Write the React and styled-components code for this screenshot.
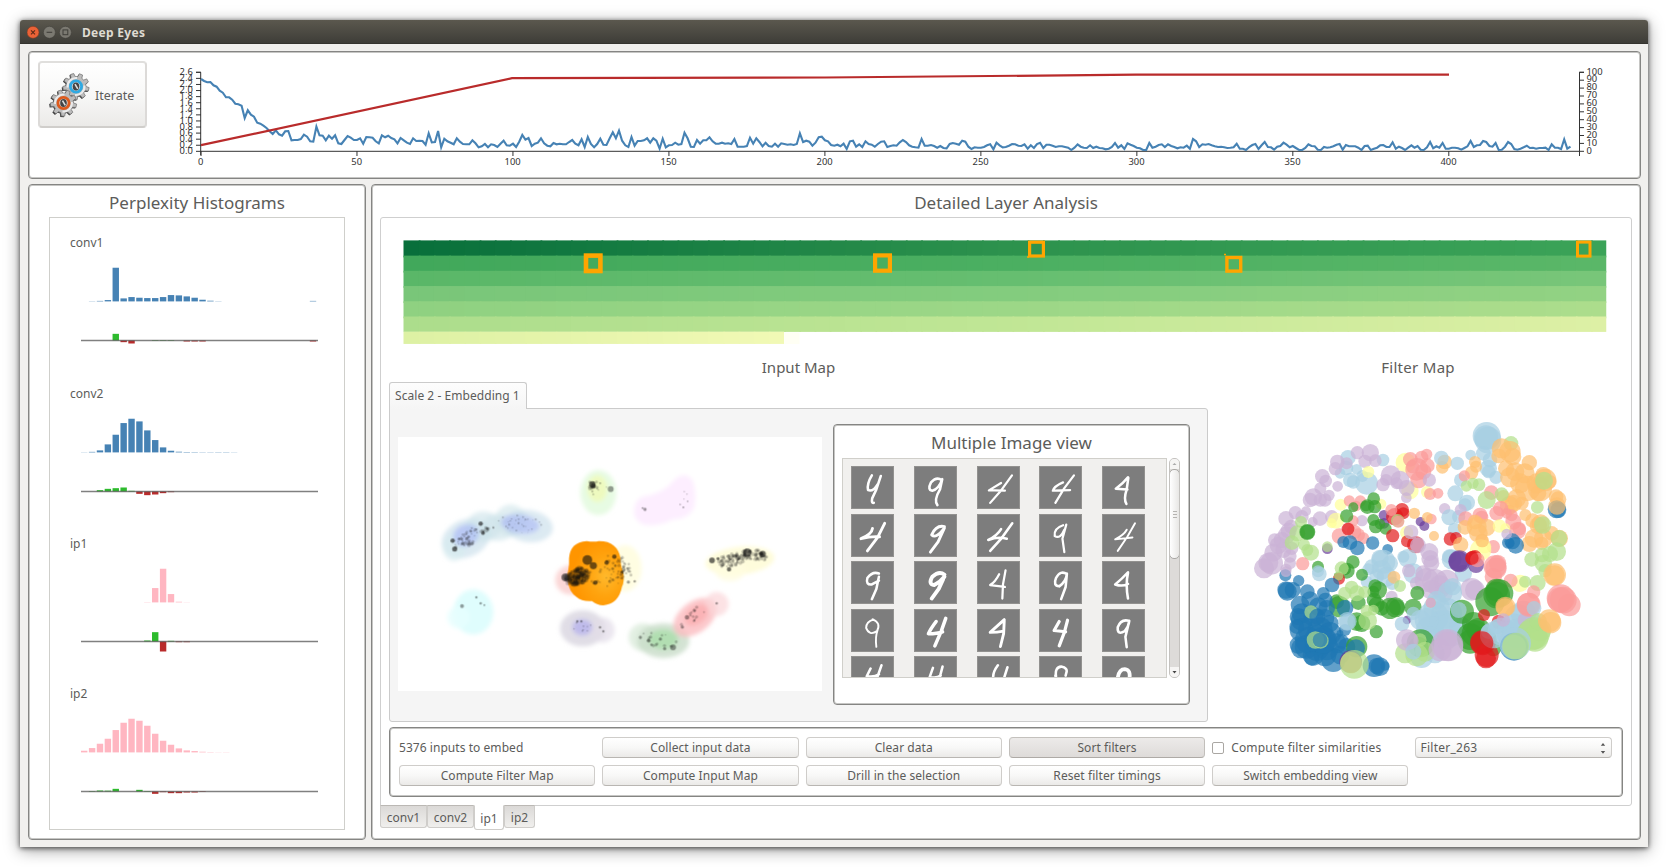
import React from "react";
import styled, { createGlobalStyle, css } from "styled-components";

const Global = createGlobalStyle`
  * { box-sizing: border-box; }
  body { margin: 0; background: #fff; font-family: "Noto Sans", "Open Sans", sans-serif; color: #5c5c5a; }
  svg { display: block; flex: none; }
`;

/* ---------- window chrome ---------- */

const Desktop = styled.div`
  padding: 20px;
  height: 867px;
  overflow: hidden;
`;
const Window = styled.div`
  width: 1628px;
  height: 827px;
  display: flex;
  flex-direction: column;
  background: #f1f0ee;
  border-radius: 3px 3px 0 0;
  box-shadow: 0 1px 5px rgba(0, 0, 0, 0.65), 0 3px 16px rgba(0, 0, 0, 0.4);
`;
const TitleBar = styled.header`
  height: 24px;
  flex: none;
  display: flex;
  align-items: center;
  gap: 4px;
  padding-left: 7px;
  border-radius: 3px 3px 0 0;
  border-bottom: 1px solid #35342f;
  background: linear-gradient(#5b584e, #3e3d38);
`;
const WindowTitle = styled.span`
  margin-left: 4px;
  padding-top: 2px;
  font-size: 12px;
  font-weight: 700;
  letter-spacing: 0.3px;
  color: #dfdbd2;
`;
const Body = styled.div`
  flex: 1;
  display: flex;
  flex-direction: column;
  gap: 5px;
  padding: 7px 7px 7px 8px;
`;
const Panel = styled.section`
  background: #fff;
  border: 1px solid #858583;
  border-radius: 4px;
  box-shadow: inset 0 0 0 1px #c6c6c4;
`;
const TopPanel = styled(Panel)`
  display: flex;
  height: 128px;
  flex: none;
  padding-left: 9px;
`;
const Controls = styled.div`
  display: flex;
  flex-direction: column;
  padding-top: 9px;
  width: 122px;
`;
const raised = css`
  font-family: inherit;
  color: #5c5c5a;
  border: 1px solid #cfcdca;
  border-bottom-color: #b9b6b2;
  border-radius: 4px;
  background: linear-gradient(#ffffff, #f8f8f7 50%, #ebeae8);
`;
const IterateButton = styled.button`
  ${raised}
  width: 109px;
  height: 67px;
  display: flex;
  align-items: center;
  padding: 1px 0 0 9px;
  gap: 5px;
  font-size: 12.5px;
  border-width: 2px;
  border-color: #e0dfdd #dcdad8 #d0cecb;
`;
const Columns = styled.div`
  flex: 1;
  display: flex;
  gap: 5px;
`;
const LeftPanel = styled(Panel)`
  width: 338px;
`;
const RightPanel = styled(Panel)`
  width: 1270px;
`;
const PanelTitle = styled.h1`
  margin: 0;
  height: ${(p) => p.$h || 32}px;
  line-height: 23px;
  padding-top: 6px;
  text-align: center;
  font-size: 17px;
  font-weight: 400;
`;

/* ---------- histograms ---------- */

const HistogramBox = styled.div`
  margin: 0 20px;
  height: 613px;
  border: 1px solid #cfcfcb;
`;
const HistogramSection = styled.div`
  height: 150.3px;
  padding-top: 17.4px;
`;
const LayerName = styled.div`
  height: 16px;
  line-height: 16px;
  padding-left: 20px;
  font-size: 12px;
`;
const HistogramSvg = styled.svg`
  margin-left: 31px;
`;

/* ---------- detail area ---------- */

const DetailFrame = styled.div`
  margin-left: 8px;
  width: 1252px;
  height: 589px;
  border: 1px solid #cfcfcf;
  border-radius: 3px 3px 3px 0;
  padding: 22px 8px 0;
`;
const HeatmapWrap = styled.div`
  padding-left: 14px;
`;
const MapRow = styled.div`
  display: flex;
`;
const InputColumn = styled.div`
  width: 819px;
`;
const FilterColumn = styled.div`
  flex: 1;
  display: flex;
  flex-direction: column;
  padding-left: 22px;
`;
const MapTitle = styled.h2`
  margin: 0;
  height: 37px;
  line-height: 24px;
  padding-top: 10px;
  text-align: center;
  font-size: 15px;
  font-weight: 400;
`;
const FilterTitle = styled(MapTitle)`
  height: 55px;
  width: 376px;
  letter-spacing: 0.3px;
`;
const EmbeddingTab = styled.div`
  position: relative;
  width: 138px;
  height: 27px;
  margin-bottom: -1px;
  padding-left: 5px;
  line-height: 26px;
  font-size: 12px;
  letter-spacing: 0.05px;
  white-space: nowrap;
  background: linear-gradient(#fdfdfd, #f5f5f5);
  border: 1px solid #cbcbcb;
  border-bottom: 0;
  border-radius: 3px 3px 0 0;
`;
const EmbeddingPane = styled.div`
  width: 819px;
  height: 314px;
  display: flex;
  align-items: flex-start;
  background: #f5f5f5;
  border: 1px solid #cbcbcb;
  border-radius: 0 3px 3px 3px;
`;
const InputMapSvg = styled.svg`
  margin: 28px 11px 0 8px;
  background: #fff;
`;
const ImagePanel = styled(Panel)`
  margin-top: 15px;
  width: 357px;
  height: 281px;
  padding: 0 8px;
`;
const ImageArea = styled.div`
  display: flex;
  gap: 2px;
`;
const Thumbs = styled.div`
  width: 325px;
  height: 220px;
  overflow: hidden;
  display: grid;
  grid-template-columns: repeat(5, 43px);
  grid-auto-rows: 43px;
  column-gap: 19.8px;
  row-gap: 4.6px;
  padding: 7px 0 0 8px;
  background: #f1f0ee;
  border: 1px solid #d0cfca;
`;
const Thumb = styled.svg`
  background: #7d7d7d;
  border: 1px solid #92918f;
`;
const ScrollTrack = styled.div`
  width: 11px;
  height: 220px;
  display: flex;
  flex-direction: column;
  align-items: center;
  background: #dddbd9;
  border: 1px solid #c4c2bf;
  border-radius: 5px;
  overflow: hidden;
`;
const ScrollEnd = styled.div`
  width: 9px;
  height: 10px;
  display: flex;
  align-items: center;
  justify-content: center;
  background: #f6f5f4;
`;
const ScrollHandle = styled.div`
  width: 11px;
  height: 90px;
  display: flex;
  flex-direction: column;
  align-items: center;
  justify-content: center;
  gap: 2px;
  border: 1px solid #aaa8a5;
  border-radius: 5px;
  background: linear-gradient(90deg, #fff, #e8e7e5);
`;
const Grip = styled.i`
  width: 4px;
  height: 1px;
  background: #b5b3b0;
`;
const Spacer = styled.div`
  flex: 1;
`;

/* ---------- action grid ---------- */

const ActionPanel = styled(Panel)`
  margin-top: 5px;
  width: 1234px;
  height: 70px;
  display: grid;
  grid-template-columns: repeat(6, 196.3px);
  grid-template-rows: 21px 21px;
  column-gap: 7px;
  row-gap: 7px;
  padding: 9px;
`;
const ActionButton = styled.button`
  ${raised}
  padding: 0;
  font-size: 12px;
  line-height: 18px;
  letter-spacing: 0.07px;
  ${(p) => p.$pressed && "background: linear-gradient(#eceae9, #dedbd9); border-color: #c4c1bd #c2bfbb #aeaaa6;"}
`;
const StatusText = styled.span`
  font-size: 12px;
  line-height: 21px;
  letter-spacing: 0.05px;
`;
const CheckLabel = styled.label`
  display: flex;
  align-items: center;
  gap: 7px;
  font-size: 12px;
  line-height: 21px;
  letter-spacing: 0.17px;
  white-space: nowrap;
`;
const CheckBox = styled.span`
  width: 12px;
  height: 12px;
  background: #fff;
  border: 1px solid #aaa7a3;
  border-radius: 2px;
`;
const Select = styled.div`
  ${raised}
  display: flex;
  align-items: center;
  justify-content: space-between;
  padding: 0 5px 0 4px;
  font-size: 12px;
  line-height: 18px;
  letter-spacing: 0.25px;
`;

const LayerTabs = styled.nav`
  display: flex;
  align-items: flex-start;
  margin: -1px 0 0 8px;
`;
const LayerTab = styled.span`
  width: ${(p) => p.$w}px;
  height: ${(p) => (p.$active ? 25 : 23)}px;
  line-height: ${(p) => (p.$active ? 25 : 23)}px;
  text-align: center;
  font-size: 12px;
  border: 1px solid #cfcdca;
  border-top-color: ${(p) => (p.$active ? "#fff" : "#bbb8b4")};
  border-radius: 0 0 3px 3px;
  background: ${(p) => (p.$active ? "#fff" : "linear-gradient(#dbd9d7, #f0efed)")};
`;

/* ---------- loss / accuracy chart ---------- */

const LOSS = [
  237,243,247,246,256,260,272,278,292,292,299,311,313,317,354,331,344,350,368,371,377,384,394,402,391,403,407,394,393,421,
  420,420,417,404,410,424,425,380,406,407,421,407,416,406,430,432,420,408,413,420,420,415,431,411,412,413,424,430,406,412,
  407,414,418,430,414,421,428,432,415,423,422,423,434,400,427,426,393,442,416,424,428,433,415,425,432,433,433,421,430,442,
  439,432,442,433,435,441,431,422,436,437,431,441,425,405,419,414,438,431,428,415,430,437,439,429,433,431,433,433,426,420,
  431,436,418,441,411,432,442,432,416,434,435,415,397,415,392,422,436,441,411,437,423,423,421,415,428,415,422,446,416,442,
  436,435,428,434,432,398,415,440,441,420,431,421,421,412,424,431,431,428,431,430,432,417,440,440,440,438,413,431,415,426,
  439,428,438,440,431,440,430,432,434,433,435,432,400,426,422,425,437,428,412,410,421,424,435,437,434,439,431,447,424,422,
  440,433,441,424,432,434,440,432,425,424,441,438,436,437,427,420,426,436,440,442,443,417,437,437,435,438,443,438,444,445,
  432,429,431,434,422,425,440,447,442,443,443,441,436,433,448,428,436,442,441,437,432,433,437,438,433,446,436,444,432,428,
  444,434,434,437,441,439,439,441,443,450,443,433,440,443,444,436,444,440,444,445,448,446,441,429,443,436,447,430,434,438,
  443,445,450,450,429,443,440,435,433,441,433,438,441,445,442,443,437,446,417,424,441,433,434,432,436,439,441,440,442,444,
  443,442,431,446,446,450,441,435,432,447,436,426,441,442,449,440,438,428,434,442,438,444,450,450,444,433,438,439,449,450,
  441,443,442,439,434,432,449,435,439,439,439,443,450,438,437,450,446,443,436,435,441,441,427,446,440,444,450,443,436,443,
  438,449,450,442,426,445,439,443,429,446,446,443,443,445,449,444,439,423,441,436,435,423,426,438,440,429,450,449,440,426,
  432,447,449,446,442,437,444,443,446,444,444,443,450,433,443,443,447,418,446,440,
];

const range = (n) => Array.from({ length: n }, (_, i) => i);
const iterX = (i) => 201 + i * 3.1195;

function TrainingChart() {
  const label = { fontSize: 9.4, fill: "#333" };
  return (
    <svg width="1474" height="126" viewBox="160 52 1474 126" fontFamily="Noto Sans, sans-serif">
      <g stroke="#333" strokeWidth="1" fill="none">
        <path d="M196 72.3H200.7V155M201 151.3H1579.5M1584 72.3H1579.5V156" />
        {range(14).map((i) => (
          <path key={i} d={`M196 ${72.3 + i * 6.08}H201`} />
        ))}
        {range(11).map((i) => (
          <path key={i} d={`M1579 ${72.3 + i * 7.9}H1584`} />
        ))}
        {range(9).map((i) => (
          <path key={i} d={`M${iterX(i * 50)} 151V156`} />
        ))}
      </g>
      <g {...label} textAnchor="end">
        {range(14).map((i) => (
          <text key={i} x="192.8" y={75.4 + i * 6.02}>{(2.6 - i * 0.2).toFixed(1)}</text>
        ))}
      </g>
      <g {...label}>
        {range(11).map((i) => (
          <text key={i} x="1586.5" y={74.5 + i * 7.95}>{100 - i * 10}</text>
        ))}
      </g>
      <g {...label} textAnchor="middle">
        {range(9).map((i) => (
          <text key={i} x={iterX(i * 50) - 0.3} y="164.6">{i * 50}</text>
        ))}
      </g>
      <polyline
        points={LOSS.map((v, i) => `${iterX(i).toFixed(1)},${(v / 3).toFixed(1)}`).join(" ")}
        fill="none" stroke="#4682b4" strokeWidth="2.1"
      />
      <polyline points="201,145.2 512,78.2 825,77.5 1136,74.7 1449,74.7" fill="none" stroke="#b92b2b" strokeWidth="2.2" />
    </svg>
  );
}

/* ---------- histogram data (heights in thirds of a pixel) ---------- */

const LAYERS = [
  {
    name: "conv1", color: "#4682b4",
    bars: { 1: 0.6, 2: 1.5, 3: 4, 4: 101, 5: 9, 6: 13, 7: 11, 8: 10, 9: 10, 10: 13, 11: 19, 12: 18, 13: 15, 14: 11, 15: 5, 16: 2, 17: 0.6, 29: 1.5 },
    diff: { 4: 20, 5: -5, 6: -9, 9: 1.5, 10: 1.5, 11: 1.5, 13: -3, 14: -3, 15: -3, 29: -3 },
  },
  {
    name: "conv2", color: "#4682b4",
    bars: { 0: 0.5, 1: 1.6, 2: 6, 3: 24, 4: 53, 5: 88, 6: 101, 7: 93, 8: 66, 9: 37, 10: 15, 11: 5, 12: 2, 13: 1.2, 14: 1, 15: 0.7, 16: 0.7, 17: 0.8, 18: 0.8, 19: 0.5 },
    diff: { 2: 4, 3: 8, 4: 10, 5: 12, 6: 2, 7: -7, 8: -11, 9: -9, 10: -5, 11: -2 },
  },
  {
    name: "ip1", color: "#ffb6c1",
    bars: { 8: 0.8, 9: 43, 10: 101, 11: 25, 12: 2, 13: 0.5 },
    diff: { 8: 3, 9: 28, 10: -30, 11: 2, 12: -2, 13: -2 },
  },
  {
    name: "ip2", color: "#ffb6c1",
    bars: { 0: 5, 1: 13, 2: 26, 3: 41, 4: 67, 5: 89, 6: 101, 7: 95, 8: 80, 9: 56, 10: 35, 11: 23, 12: 12, 13: 6, 14: 4, 15: 2, 16: 1, 17: 0.5, 18: 0.6 },
    diff: { 1: 1.5, 2: 3, 3: 2.5, 4: 8, 7: 5, 8: 1.5, 9: -7, 10: -2, 11: -5, 12: -5, 13: -3, 14: -3, 15: -1.5 },
  },
];

function Histogram({ layer }) {
  const x = (i) => i * 7.89;
  return (
    <HistogramSection>
      <LayerName>{layer.name}</LayerName>
      <HistogramSvg width="237" height="116" viewBox="0 0 237 116">
        {Object.entries(layer.bars).map(([i, h]) => (
          <rect key={i} x={x(i)} y={50.4 - h / 3} width="6.4" height={h / 3} fill={layer.color} />
        ))}
        {Object.entries(layer.diff).map(([i, h]) => (
          <rect key={i} x={x(i)} y={h > 0 ? 89.5 - h / 3 : 89.5} width="6.4" height={Math.abs(h) / 3} fill={h > 0 ? "#2dbb2d" : "#b92b2b"} />
        ))}
        <path d="M0 89.5H237" stroke="#555" strokeOpacity="0.75" strokeWidth="1.3" />
      </HistogramSvg>
    </HistogramSection>
  );
}

/* ---------- heat map ---------- */

const HEAT_ROWS = [
  [[8, 111, 59], [45, 146, 77], [59, 163, 88]],
  [[65, 168, 91], [75, 175, 97], [90, 183, 104]],
  [[90, 183, 104], [102, 190, 112], [120, 198, 121]],
  [[121, 198, 121], [131, 204, 126], [146, 210, 131]],
  [[143, 209, 129], [156, 215, 135], [172, 221, 140]],
  [[172, 221, 140], [192, 230, 149], [221, 240, 165]],
  [[221, 241, 164], [231, 245, 172], [241, 249, 181]],
];
const mix = (stops, t) => {
  const [a, b, u] = t < 0.5 ? [stops[0], stops[1], t * 2] : [stops[1], stops[2], t * 2 - 1];
  return `rgb(${a.map((v, i) => Math.round(v + (b[i] - v) * u)).join(",")})`;
};
const MARKERS = [
  [583.7, 253.3, 19, 20, 4.6],
  [873, 253.3, 19, 19.5, 4.2],
  [1028, 240.6, 17, 17, 3.2],
  [1225.2, 255.8, 17.2, 17, 3.4],
  [1576, 240.6, 15.5, 17, 3],
];

function Heatmap() {
  return (
    <svg width="1205" height="105" viewBox="403 240 1205 105">
      {HEAT_ROWS.map((stops, r) => {
        const n = r === 6 ? 25 : 79;
        return range(n).map((c) => (
          <rect
            key={`${r}-${c}`} x={403.5 + c * 15.225} y={240.4 + r * 15.22} width={c === n - 1 ? 15.2 : 17}
            height={r === 6 ? 12.2 : r === 5 ? 15.4 : 17} fill={mix(stops, c / (n - 1))}
          />
        ));
      })}
      <rect x="784.5" y="332.5" width="15" height="11.5" fill="#fffff4" />
      {MARKERS.map(([x, y, w, h, s]) => (
        <rect key={x} x={x + s / 2} y={y + s / 2} width={w - s} height={h - s} fill="none" stroke="#ffa500" strokeWidth={s} />
      ))}
      <path d="M1224 254.5H1226M1027 257H1029" stroke="#ffa500" strokeWidth="1.6" />
    </svg>
  );
}

/* ---------- input map ---------- */

const random = (seed) => () => {
  seed = (seed * 16807) % 2147483647;
  return seed / 2147483647;
};
/* cx, cy, rx, ry, rotation, colour, opacity */
const HAZE = [
  [258, 385, 76, 56, -25, "#c5dcea", 0.6],
  [222, 412, 34, 42, 0, "#d6ebee", 0.6],
  [310, 350, 52, 46, 0, "#cbe2ea", 0.6],
  [355, 352, 50, 40, 0, "#cbe2ea", 0.6],
  [392, 332, 48, 48, 0, "#cfe5ea", 0.6],
  [445, 348, 74, 48, 8, "#c5dcea", 0.6],
  [258, 376, 40, 32, -25, "#9faef5", 0.55],
  [420, 342, 58, 28, 8, "#a9b6f5", 0.6],
  [655, 248, 54, 68, 0, "#e4fbe0", 0.9],
  [652, 236, 30, 40, 0, "#f2fbb0", 0.7],
  [572, 510, 46, 44, 0, "#f9bdba", 0.6],
  [735, 475, 50, 70, 0, "#fffcd8", 0.75],
  [1080, 452, 104, 42, -6, "#fdfbcf", 0.75],
  [1050, 480, 46, 34, 0, "#fffde0", 0.8],
  [280, 606, 60, 68, 0, "#dffdfd", 1],
  [236, 622, 34, 34, 0, "#e6fefe", 0.8],
  [608, 655, 68, 54, 0, "#d6d2dd", 0.75],
  [668, 660, 36, 38, 0, "#e2dde8", 0.7],
  [607, 652, 30, 24, 0, "#b1adee", 0.7],
  [790, 682, 44, 42, 0, "#d8e9d8", 0.75],
  [850, 692, 78, 52, 0, "#c8dcc8", 0.8],
  [850, 688, 44, 30, 0, "#a4dda4", 0.7],
  [945, 622, 74, 46, -38, "#fbbcbf", 0.8],
  [1010, 582, 36, 36, 0, "#fbd6d8", 0.7],
  [950, 615, 40, 26, -38, "#fba9ad", 0.7],
];
/* cx, cy, rx, ry, rotation (deg), count, minimum r, maximum r */
const CLOUDS = [
  [262, 382, 46, 16, -40, 34, 2, 5],
  [262, 400, 20, 10, -20, 14, 3, 6],
  [322, 358, 24, 8, -10, 16, 2, 5],
  [420, 342, 70, 26, 4, 36, 1, 3],
  [640, 228, 14, 18, 0, 10, 3, 6],
  [660, 240, 30, 30, 0, 7, 2, 3],
  [592, 500, 36, 26, -14, 130, 4, 8],
  [705, 475, 32, 48, -10, 34, 2, 5],
  [735, 470, 16, 36, -28, 22, 3, 5],
  [680, 500, 60, 30, 0, 18, 2, 5],
  [1050, 452, 36, 20, -8, 60, 3, 6],
  [1105, 436, 40, 20, -8, 56, 3, 6],
  [1140, 438, 24, 14, 0, 22, 3, 6],
  [830, 690, 62, 22, 8, 16, 2, 5],
  [940, 618, 46, 18, -40, 14, 2, 5],
  [610, 648, 44, 16, 0, 8, 2, 3],
  [905, 265, 30, 26, 0, 5, 1.5, 2.5],
];
const POINTS = [
  [218, 392, 7], [224, 417, 8], [302, 341, 7], [309, 369, 6], [637, 223, 10], [640, 228, 8], [622, 450, 15], [640, 467, 11],
  [703, 440, 7], [646, 518, 7], [680, 458, 7], [556, 502, 12], [996, 451, 9], [1014, 446, 5], [1148, 432, 10], [1102, 428, 13],
  [1047, 478, 7], [692, 237, 9], [246, 588, 6], [289, 562, 4], [302, 580, 4], [313, 585, 3], [592, 634, 4], [604, 634, 4], [660, 652, 4],
  [670, 664, 4], [781, 682, 5], [806, 692, 6], [841, 687, 5], [854, 716, 5], [879, 712, 9], [921, 622, 7], [1010, 580, 4],
  [907, 651, 5], [943, 601, 5], [795, 298, 5], [788, 294, 3], [923, 274, 2.5], [910, 292, 3], [764, 514, 4], [745, 516, 5],
];

function InputMap() {
  const rnd = random(77);
  const dots = CLOUDS.flatMap(([cx, cy, rx, ry, rot, n, r0, r1]) =>
    range(n).map(() => {
      const a = rnd() * Math.PI * 2;
      const d = Math.sqrt(rnd());
      const t = (rot * Math.PI) / 180;
      const u = Math.cos(a) * d * rx;
      const v = Math.sin(a) * d * ry;
      return [cx + u * Math.cos(t) - v * Math.sin(t), cy + u * Math.sin(t) + v * Math.cos(t), r0 + rnd() * (r1 - r0)];
    })
  );
  return (
    <InputMapSvg width="424" height="254" viewBox="54 81 1272 762">
      <defs>
        <filter id="haze" x="-30%" y="-30%" width="160%" height="160%">
          <feGaussianBlur stdDeviation="7" />
        </filter>
        <radialGradient id="ember" cx="0.68" cy="0.55" r="0.6">
          <stop offset="0" stopColor="#ffb92c" />
          <stop offset="0.5" stopColor="#ffa40f" />
          <stop offset="1" stopColor="#ff9500" />
        </radialGradient>
      </defs>
      <g filter="url(#haze)">
        {HAZE.map(([cx, cy, rx, ry, rot, fill, o], i) => (
          <ellipse key={i} cx={cx} cy={cy} rx={rx} ry={ry} fill={fill} opacity={o} transform={`rotate(${rot} ${cx} ${cy})`} />
        ))}
        <path d="M762 300Q765 258 810 256Q860 240 878 215Q908 180 938 210Q952 250 942 295Q920 330 880 328Q830 352 790 344Q760 330 762 300Z" fill="#fdeeff" />
      </g>
      <path
        d="M567 445Q570 396 620 393Q642 396 656 393Q712 392 722 446Q720 462 730 488Q734 515 726 530Q716 582 670 586Q650 585 636 573Q605 575 590 561Q566 545 563 510Q560 495 565 478Q568 462 567 445Z"
        fill="url(#ember)"
      />
      <g fill="#111" fillOpacity="0.23">
        {[...dots, ...POINTS].map(([x, y, r], i) => (
          <circle key={i} cx={x.toFixed(1)} cy={y.toFixed(1)} r={r.toFixed(1)} />
        ))}
        {POINTS.map(([x, y, r], i) => (
          <circle key={i} cx={x} cy={y} r={r - 0.5} />
        ))}
        {POINTS.slice(0, 17).map(([x, y, r], i) => (
          <circle key={i} cx={x} cy={y} r={r - 1} fillOpacity="0.35" />
        ))}
      </g>
    </InputMapSvg>
  );
}

/* ---------- filter map: colour key followed by x, y, r triples ---------- */

const PALETTE = {
  l: "#cab2d6", c: "#a6cee3", b: "#1f78b4", g: "#33a02c", n: "#b2df8a",
  p: "#fb9a99", r: "#e31a1c", o: "#fdbf6f", v: "#6a3d9a", y: "#ffff99",
};
const FILTERS = [
  ["c", [354,173,23, 348,204,22, 361,240,22, 330,220,16, 370,246,20, 397,228,18, 410,250,34, 459,180,19, 380,208,16]],
  ["l", [382,158,20, 421,158,26, 436,182,19, 405,184,20, 322,186,22, 316,206,20, 350,190,18, 277,229,22, 287,243,19, 271,265,18, 323,259,16, 250,291,26, 240,300,22, 285,300,20, 297,286,17, 271,300,20]],
  ["l", [196,338,20, 228,334,15, 168,356,23, 216,350,20, 270,356,22, 305,350,20, 248,366,15, 183,380,21, 176,392,24, 170,405,26, 134,420,20, 145,436,26, 160,450,24, 130,458,27, 115,488,30, 102,505,30, 125,490,34, 180,468,20, 180,490,18, 168,508,17, 185,445,20, 155,420,24, 396,362,17]],
  ["n", [213,366,18, 202,400,24, 186,428,22, 222,434,18, 243,458,24, 232,450,18]],
  ["g", [232,396,24, 232,396,22, 264,500,18]],
  ["v", [292,446,16, 462,346,16, 462,370,16, 571,365,14, 583,378,15]],
  ["n", [292,440,16]],
  ["y", [415,216,18, 332,314,18, 318,362,24, 305,370,15, 453,312,16, 527,188,30, 540,272,26, 591,276,18, 530,398,20]],
  ["p", [218,491,20, 358,303,17, 391,303,17, 378,318,16, 370,362,16, 328,408,23, 372,396,22, 385,405,20, 400,415,18, 356,385,18]],
  ["g", [431,296,19, 412,320,22, 434,320,20, 370,322,15, 350,348,20, 408,318,16, 430,360,18, 437,380,20, 467,386,18, 450,372,16]],
  ["r", [354,387,19, 516,330,21, 494,350,26, 520,340,18, 488,407,20, 531,424,18, 557,434,26]],
  ["p", [541,178,22, 590,163,17, 575,172,20, 560,208,34, 592,197,22, 580,215,24, 566,240,25, 548,200,20, 600,282,18, 624,280,16, 604,357,16, 484,330,18]],
  ["n", [503,362,20]],
  ["p", [505,365,18]],
  ["l", [482,226,30, 510,240,28, 459,254,20, 468,240,18, 598,240,20, 530,264,24, 529,293,16, 543,396,22, 564,436,24, 644,326,17, 500,250,18]],
  ["o", [553,340,17, 592,352,16, 612,408,15, 644,186,22, 637,202,19]],
  ["c", [634,174,22, 682,190,20, 722,165,16, 770,108,42, 774,120,40, 768,112,36, 760,160,22, 775,205,26, 780,180,22, 798,232,20, 776,215,20, 692,240,20, 676,280,24, 711,308,24, 705,315,20, 658,352,24, 674,388,20, 686,350,20]],
  ["o", [735,186,18, 738,200,18, 725,218,20]],
  ["p", [703,228,17]],
  ["n", [709,258,17, 729,250,17, 747,254,19, 843,130,22]],
  ["o", [815,145,30, 840,155,32, 848,170,26, 806,168,22, 828,205,24, 840,232,30, 855,215,28, 884,220,30, 898,188,23, 870,250,30, 893,265,38, 930,268,36, 945,240,34, 940,225,24, 960,245,20, 920,250,30, 925,280,24, 860,295,28, 850,310,26, 838,316,28, 876,310,20, 838,330,16, 820,290,20, 985,298,24, 978,290,22]],
  ["p", [784,278,22]],
  ["n", [770,300,27, 815,283,21, 942,242,27, 922,322,19]],
  ["b", [980,328,27, 985,330,24]],
  ["o", [981,318,26]],
  ["l", [692,330,18]],
  ["p", [812,326,23, 800,340,22, 750,346,23, 755,352,20, 707,356,22, 845,346,18, 850,365,24, 862,392,26, 868,386,20, 790,440,20, 830,340,16]],
  ["o", [705,382,22, 740,380,30, 770,382,26, 745,400,28, 735,366,22, 755,422,20, 886,345,18, 908,362,22, 932,370,27, 925,376,26, 912,415,28, 898,432,24, 940,415,28, 965,400,22, 988,415,26, 935,430,20]],
  ["n", [938,375,26, 987,415,25, 980,455,28, 960,462,24, 936,465,22, 905,478,22, 940,490,26, 945,512,20]],
  ["y", [808,378,20, 826,385,15, 752,450,32, 764,440,20]],
  ["r", [661,417,20, 678,414,18]],
  ["o", [692,434,23, 757,422,20]],
  ["b", [847,424,24, 857,436,25, 834,428,18, 840,430,14, 340,426,18, 360,428,22, 382,444,22, 428,429,20, 473,448,16]],
  ["l", [830,402,16, 598,456,27, 600,476,26, 604,490,24]],
  ["c", [460,485,36, 450,475,26, 480,490,24, 533,475,28, 520,470,18, 425,500,22, 415,508,18, 455,510,30, 470,530,30, 440,530,22, 410,545,18, 487,550,20, 665,478,30, 658,470,22, 700,520,26, 268,522,22, 550,520,30]],
  ["v", [688,484,33, 686,484,30, 738,495,24]],
  ["p", [795,500,34, 798,505,32, 790,530,26, 803,490,26]],
  ["r", [728,474,22, 735,470,20]],
  ["p", [742,480,22]],
  ["r", [726,474,20]],
  ["l", [590,540,36, 615,545,38, 630,560,34, 650,545,36, 560,550,20, 605,570,30, 640,580,28, 536,512,20, 725,568,34, 735,570,30, 580,520,24, 485,590,18]],
  ["g", [369,486,20, 350,512,24, 345,508,18, 396,524,18, 325,530,14, 435,558,20, 445,570,26, 430,575,18, 385,608,22, 440,614,24, 432,600,22, 480,625,32, 496,622,30, 500,622,24, 549,622,26, 562,579,21, 328,620,32, 380,665,28, 395,670,26, 439,695,20, 320,605,22, 455,625,22]],
  ["o", [492,532,19]],
  ["n", [335,505,21, 365,562,20, 380,580,24, 403,576,18, 345,580,20, 510,558,18, 413,662,28, 410,632,18, 430,630,16]],
  ["r", [327,536,18]],
  ["n", [326,528,14]],
  ["c", [264,514,18]],
  ["b", [166,526,18, 206,542,17, 172,574,28, 168,570,26, 188,570,24, 306,555,22, 280,580,19, 232,575,22, 286,600,22, 240,600,26, 210,615,28, 265,620,28, 290,625,25, 215,640,30, 205,650,26, 250,650,30, 285,655,28, 215,690,36, 240,690,36, 270,690,38, 300,700,34, 205,735,26, 230,740,36, 260,745,38, 290,745,36, 320,730,30, 335,725,22, 250,765,32, 285,765,34, 310,780,36, 235,720,40, 270,720,46, 213,745,30, 330,765,28, 215,660,32, 280,720,40, 245,775,22, 345,625,25, 350,740,26, 200,680,22, 345,690,18, 300,670,26]],
  ["l", [168,515,16]],
  ["n", [243,636,20, 256,720,26, 272,722,24]],
  ["b", [270,720,22, 262,650,24, 330,700,10]],
  ["c", [352,664,28, 352,666,24]],
  ["g", [380,740,32]],
  ["b", [378,745,27, 432,797,34, 450,800,28, 440,798,24, 465,798,14]],
  ["v", [362,785,34, 531,660,13]],
  ["o", [363,788,32]],
  ["n", [373,793,43]],
  ["y", [870,550,26]],
  ["n", [885,545,18, 923,549,24]],
  ["o", [974,524,34, 974,526,30]],
  ["p", [842,542,21]],
  ["c", [660,580,36, 668,560,26]],
  ["c", [620,625,40, 610,650,46, 650,640,46, 640,680,50, 600,690,42, 660,690,50, 590,660,36, 570,660,30, 620,600,28, 575,770,34, 615,760,30, 550,640,20, 516,672,22, 690,680,32, 600,720,40]],
  ["p", [602,608,15]],
  ["l", [602,608,14]],
  ["g", [696,635,36, 780,605,44, 800,585,40, 808,580,42, 800,570,34, 735,700,40, 720,725,36, 745,690,36, 760,720,40, 730,670,34, 790,745,24, 720,710,40, 572,730,42, 565,740,30]],
  ["c", [686,630,24]],
  ["r", [762,645,18, 807,666,22, 758,728,38, 770,765,36, 768,775,30]],
  ["n", [525,760,30, 560,765,34, 585,755,30, 570,720,20]],
  ["l", [530,720,32, 540,722,26, 652,735,48, 655,740,44, 630,750,34, 650,720,30]],
  ["c", [550,755,24, 815,695,42, 850,680,40, 865,655,42, 880,640,38, 790,705,40, 835,700,36, 800,680,22, 900,665,34, 860,700,44, 775,695,22]],
  ["o", [826,620,30, 825,622,27]],
  ["l", [820,660,20, 885,660,22]],
  ["p", [911,576,20, 896,614,36, 895,612,34, 992,595,42, 990,600,38, 1018,615,34, 1000,600,40]],
  ["c", [912,625,22]],
  ["n", [905,705,46, 915,715,40, 930,690,34, 912,700,48, 925,665,26]],
  ["b", [852,740,42]],
  ["n", [852,740,36]],
  ["c", [855,730,48]],
  ["n", [857,738,40]],
  ["o", [958,662,34, 962,668,32]],
  ["r", [756,728,34]],
];

function FilterMap() {
  return (
    <svg width="370" height="300" viewBox="0 0 1110 900">
      {FILTERS.map(([key, flat], g) => (
        <g key={g} fill={PALETTE[key]} fillOpacity="0.7">
          {range(flat.length / 3).map((i) => (
            <circle key={i} cx={flat[i * 3]} cy={flat[i * 3 + 1]} r={flat[i * 3 + 2]} />
          ))}
        </g>
      ))}
    </svg>
  );
}

/* ---------- handwriting samples: pen strokes on a 128 x 128 tile, pen width ---------- */

const SAMPLES = [
  ["M62 26Q46 52 50 72Q66 78 80 54M90 28L76 70L63 98Q60 114 68 112", 8],
  ["M84 42Q68 28 50 48Q38 72 54 74Q74 70 85 38L78 70Q58 104 70 119", 8],
  ["M72 50L34 73Q60 72 84 74M106 26L70 76L38 112", 7],
  ["M72 48Q44 60 40 74L94 72M106 26L76 66L48 112", 7],
  ["M78 32Q64 50 40 68L76 70M79 34L74 70Q64 100 73 115", 8],
  ["M64 42Q62 60 28 74Q60 66 86 68M102 26L80 70L48 112", 9],
  ["M92 36Q66 30 52 62Q66 76 92 40L72 84L48 116", 9],
  ["M72 44Q60 64 32 78Q62 66 90 74M107 26L74 72L38 112", 8],
  ["M72 32Q42 42 46 66Q64 76 76 46M82 30L70 74L76 116", 7],
  ["M74 46Q66 62 38 76L92 70M100 26L76 68L46 112", 6],
  ["M84 36Q64 28 48 50Q42 72 62 70L84 58M84 46L76 84L62 116", 8],
  ["M92 40Q76 26 54 46Q40 70 60 72Q80 62 92 46M88 54L74 84L52 114", 12],
  ["M66 38Q54 62 38 72L84 78M86 26L78 70L76 114", 7],
  ["M84 38Q64 24 50 50Q40 74 60 76Q82 60 84 36L80 78L66 116", 8],
  ["M78 32Q60 52 38 70Q60 78 78 68M78 34Q70 70 78 114", 8],
  ["M68 30Q44 36 44 56Q54 82 78 66Q92 40 64 29M80 62Q72 84 76 115", 6],
  ["M66 36Q48 60 42 74Q70 74 86 68M96 26L82 66L62 112", 11],
  ["M82 30Q60 50 38 70Q60 70 80 66M82 32L80 74L70 114", 9],
  ["M60 36L44 64L80 68M86 32L76 70L60 112", 10],
  ["M82 34Q56 26 46 54Q44 80 68 66Q80 52 82 34L70 84L74 116", 8],
  ["M58 36L46 60Q70 64 84 54M92 26L78 66", 8],
  ["M56 34L46 62Q66 68 80 58M86 30L76 68", 8],
  ["M62 26Q44 50 48 70M92 32L80 70", 8],
  ["M50 60Q46 32 66 30Q88 34 82 50L80 58M48 58L50 70", 8],
  ["M46 66Q50 38 68 38Q88 40 82 70", 12],
];

const toothedRing = (teeth, outer, inner) =>
  range(teeth)
    .map((i) => {
      const at = (r, k) => {
        const a = ((i + k) / teeth) * Math.PI * 2;
        return `${(Math.cos(a) * r).toFixed(2)} ${(Math.sin(a) * r).toFixed(2)}`;
      };
      return `${i ? "L" : "M"}${at(inner, 0)}L${at(outer, 0.12)}L${at(outer, 0.5)}L${at(inner, 0.64)}`;
    })
    .join("") + "Z";

function Gear({ x, y, ring }) {
  return (
    <g transform={`translate(${x} ${y})`}>
      <path d={toothedRing(9, 13.4, 10)} transform="translate(-0.9 0.9)" fill="#3d3d3d" />
      <path d={toothedRing(9, 13.2, 10)} fill="#bcbcbc" stroke="#6f6f6f" strokeWidth="0.7" />
      <path d="M-8.4 1A8.5 8.5 0 0 1 1 -8.4M8.4 -1A8.5 8.5 0 0 1 -1 8.4" fill="none" stroke="#ebebeb" strokeWidth="2" />
      <circle r="5.6" fill="#dcdcdc" stroke={ring} strokeWidth="2.8" />
      <ellipse rx="3.3" ry="3.9" fill="#444" />
      <path d="M-1 -2.4L1.8 2.4" stroke="#ddd" strokeWidth="1.6" />
    </g>
  );
}

const ACTIONS_TOP = ["Collect input data", "Clear data"];
const ACTIONS_BOTTOM = [
  "Compute Filter Map", "Compute Input Map", "Drill in the selection", "Reset filter timings", "Switch embedding view",
];

export default function App() {
  return (
    <Desktop>
      <Global />
      <Window>
        <TitleBar>
          <svg width="47" height="14" viewBox="0 0 47 14">
            <circle cx="6" cy="7.3" r="6" fill="#ea6237" stroke="#7d3a22" strokeWidth="0.6" />
            <path d="M4 5.3L8 9.3M8 5.3L4 9.3" stroke="#5b2a18" strokeWidth="1.1" />
            <circle cx="22.4" cy="7.3" r="6" fill="#7b7971" stroke="#3f3e39" strokeWidth="0.6" />
            <path d="M19.6 7.3H25.2" stroke="#403f3a" strokeWidth="1.1" />
            <circle cx="38.4" cy="7.3" r="6" fill="#7b7971" stroke="#3f3e39" strokeWidth="0.6" />
            <rect x="36" y="4.9" width="4.8" height="4.8" fill="none" stroke="#403f3a" strokeWidth="1" />
          </svg>
          <WindowTitle>Deep Eyes</WindowTitle>
        </TitleBar>
        <Body>
          <TopPanel>
            <Controls>
              <IterateButton>
                <svg width="41" height="46" viewBox="0 0 41 46">
                  <Gear x="27" y="14.5" ring="#2fa9e2" />
                  <Gear x="14.5" y="31" ring="#dd5a1c" />
                </svg>
                Iterate
              </IterateButton>
            </Controls>
            <TrainingChart />
          </TopPanel>
          <Columns>
            <LeftPanel>
              <PanelTitle>Perplexity Histograms</PanelTitle>
              <HistogramBox>
                {LAYERS.map((layer) => (
                  <Histogram key={layer.name} layer={layer} />
                ))}
              </HistogramBox>
            </LeftPanel>
            <RightPanel>
              <PanelTitle>Detailed Layer Analysis</PanelTitle>
              <DetailFrame>
                <HeatmapWrap>
                  <Heatmap />
                </HeatmapWrap>
                <MapRow>
                  <InputColumn>
                    <MapTitle>Input Map</MapTitle>
                    <EmbeddingTab>Scale 2 - Embedding 1</EmbeddingTab>
                    <EmbeddingPane>
                      <InputMap />
                      <ImagePanel>
                        <PanelTitle $h={33}>Multiple Image view</PanelTitle>
                        <ImageArea>
                          <Thumbs>
                            {SAMPLES.map(([d, w], i) => (
                              <Thumb key={i} width="43" height="43" viewBox="0 0 128 128">
                                <path d={d} fill="none" stroke="#fff" strokeWidth={w} strokeLinecap="round" strokeLinejoin="round" />
                              </Thumb>
                            ))}
                          </Thumbs>
                          <ScrollTrack>
                            <ScrollEnd>
                              <svg width="5" height="4" viewBox="0 0 5 4"><path d="M0.5 3L2.5 1L4.5 3Z" fill="#aaa" /></svg>
                            </ScrollEnd>
                            <ScrollHandle><Grip /><Grip /><Grip /></ScrollHandle>
                            <Spacer />
                            <ScrollEnd>
                              <svg width="5" height="4" viewBox="0 0 5 4"><path d="M0.5 1L2.5 3.4L4.5 1Z" fill="#444" /></svg>
                            </ScrollEnd>
                          </ScrollTrack>
                        </ImageArea>
                      </ImagePanel>
                    </EmbeddingPane>
                  </InputColumn>
                  <FilterColumn>
                    <FilterTitle>Filter Map</FilterTitle>
                    <FilterMap />
                  </FilterColumn>
                </MapRow>
                <ActionPanel>
                  <StatusText>5376 inputs to embed</StatusText>
                  {ACTIONS_TOP.map((t) => (
                    <ActionButton key={t}>{t}</ActionButton>
                  ))}
                  <ActionButton $pressed>Sort filters</ActionButton>
                  <CheckLabel><CheckBox />Compute filter similarities</CheckLabel>
                  <Select>
                    Filter_263
                    <svg width="6" height="12" viewBox="0 0 6 12"><path d="M0.8 3.8L3 1L5.2 3.8ZM0.8 9L3 11.8L5.2 9Z" fill="#555" /></svg>
                  </Select>
                  {ACTIONS_BOTTOM.map((t) => (
                    <ActionButton key={t}>{t}</ActionButton>
                  ))}
                </ActionPanel>
              </DetailFrame>
              <LayerTabs>
                <LayerTab $w={47}>conv1</LayerTab>
                <LayerTab $w={47}>conv2</LayerTab>
                <LayerTab $w={30} $active>ip1</LayerTab>
                <LayerTab $w={31}>ip2</LayerTab>
              </LayerTabs>
            </RightPanel>
          </Columns>
        </Body>
      </Window>
    </Desktop>
  );
}
